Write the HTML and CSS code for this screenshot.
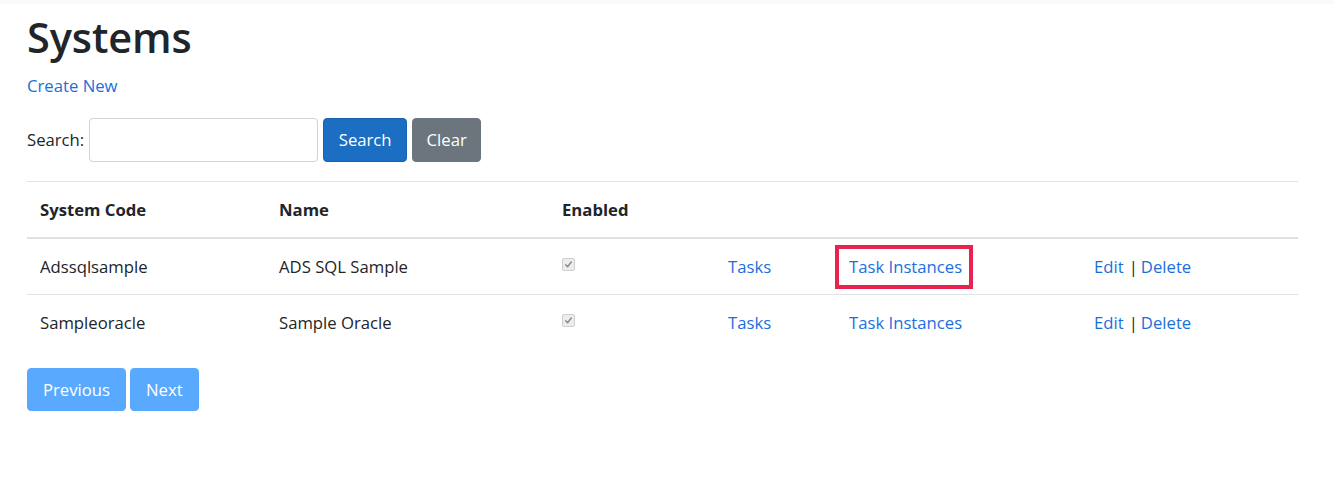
FILE: index.html
```html
<!DOCTYPE html>
<html lang="en">
<head>
<meta charset="utf-8">
<title>Systems</title>
<link rel="stylesheet" href="styles.css">
</head>
<body>
<div class="topstrip"></div>
<main class="page">
  <h1 class="title">Systems</h1>
  <p class="create"><a href="#">Create New</a></p>
  <form class="search">
    <label class="search-label">Search:</label>
    <input class="search-input" type="text">
    <button type="button" class="btn btn-primary">Search</button>
    <button type="button" class="btn btn-secondary">Clear</button>
  </form>
  <table class="grid">
    <thead>
      <tr>
        <th class="c1">System Code</th>
        <th class="c2">Name</th>
        <th class="c3">Enabled</th>
        <th class="c4"></th>
        <th class="c5"></th>
        <th class="c6"></th>
      </tr>
    </thead>
    <tbody>
      <tr>
        <td>Adssqlsample</td>
        <td>ADS SQL Sample</td>
        <td><span class="check"><svg viewBox="0 0 13 13" width="13" height="13"><path d="M3.2 6.8 L5.4 9.2 L9.8 3.6" fill="none" stroke="#8c8c8c" stroke-width="1.8" stroke-linecap="round" stroke-linejoin="round"/></svg></span></td>
        <td><a href="#">Tasks</a></td>
        <td><a href="#" class="highlight">Task Instances</a></td>
        <td><a href="#">Edit</a><span class="sep">|</span><a href="#">Delete</a></td>
      </tr>
      <tr>
        <td>Sampleoracle</td>
        <td>Sample Oracle</td>
        <td><span class="check"><svg viewBox="0 0 13 13" width="13" height="13"><path d="M3.2 6.8 L5.4 9.2 L9.8 3.6" fill="none" stroke="#8c8c8c" stroke-width="1.8" stroke-linecap="round" stroke-linejoin="round"/></svg></span></td>
        <td><a href="#">Tasks</a></td>
        <td><a href="#">Task Instances</a></td>
        <td><a href="#">Edit</a><span class="sep">|</span><a href="#">Delete</a></td>
      </tr>
    </tbody>
  </table>
  <div class="pager">
    <button type="button" class="btn btn-disabled">Previous</button>
    <button type="button" class="btn btn-disabled">Next</button>
  </div>
</main>
</body>
</html>
```
FILE: styles.css
```css
* { box-sizing: border-box; }
html, body {
  margin: 0;
  padding: 0;
  background: #ffffff;
}
body {
  font-family: "Open Sans", "Noto Sans", sans-serif;
  font-size: 16.7px;
  line-height: 25px;
  color: #212529;
}
.topstrip {
  height: 4px;
  background: #fafafa;
}
.page {
  padding: 7.5px 35px 0 27px;
}
.title {
  margin: 0 0 11px 0;
  font-size: 41.5px;
  font-weight: 600;
  line-height: 50.4px;
  color: #212529;
  letter-spacing: -0.1px;
}
a {
  color: #1a6fdc;
  text-decoration: none;
}
.create {
  margin: 0 0 20px 0;
}
.search {
  display: flex;
  align-items: center;
  height: 44px;
  margin: 0 0 19px 0;
}
.search-label {
  margin-right: 5px;
  color: #212529;
}
.search-input {
  width: 229px;
  height: 44px;
  border: 1px solid #ced4da;
  border-radius: 4px;
  margin: 0 5px 0 0;
  padding: 0 12px;
  font: inherit;
}
.btn {
  height: 44px;
  border: 1px solid transparent;
  border-radius: 4px;
  font-family: inherit;
  font-size: 16.7px;
  color: #ffffff;
  padding: 0 14.5px;
  line-height: 25px;
  cursor: pointer;
}
.btn-primary {
  background: #1b6ec2;
  border-color: #1861ac;
  margin-right: 5px;
}
.btn-secondary {
  background: #6c757d;
  border-color: #6c757d;
  padding: 0 13.5px;
}
.grid {
  width: 100%;
  border-collapse: collapse;
}
.grid th, .grid td {
  text-align: left;
  padding: 14px 13px;
  line-height: 27px;
  vertical-align: top;
  border-top: 1px solid #dee2e6;
}
.grid th {
  font-weight: 700;
  border-bottom: 2px solid #dee2e6;
}
.c1 { width: 239px; }
.c2 { width: 283px; }
.c3 { width: 166px; }
.c4 { width: 121px; }
.c5 { width: 245px; }
.sep {
  margin: 0 3px 0 5px;
  color: #212529;
}
.highlight {
  position: relative;
}
.highlight::after {
  content: "";
  position: absolute;
  left: -14px;
  right: -11px;
  top: -10px;
  bottom: -11px;
  border: 4px solid #e8234f;
}
.check {
  display: inline-block;
  width: 13px;
  height: 13px;
  margin-top: 5px;
  border: 1px solid #cfcfcf;
  border-radius: 2px;
  background: #ececec;
  vertical-align: top;
}
.check svg {
  display: block;
  width: 11px;
  height: 11px;
}
.pager {
  display: flex;
  gap: 4px;
  margin-top: 18px;
}
.btn-disabled {
  height: 43px;
  background: #59a9ff;
  border-color: #59a9ff;
  padding: 0 15px;
  cursor: default;
}
```
